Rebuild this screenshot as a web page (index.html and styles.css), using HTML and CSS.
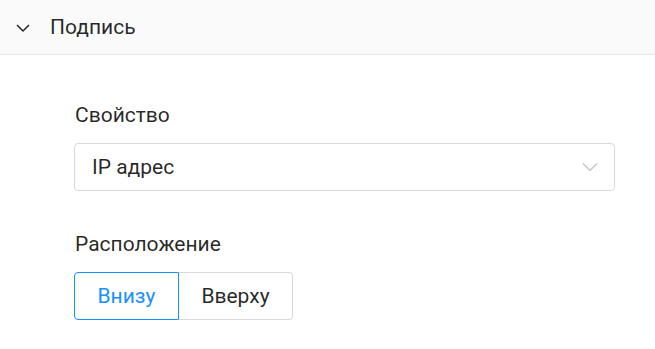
FILE: index.html
```html
<!DOCTYPE html>
<html lang="ru">
<head>
<meta charset="utf-8">
<link rel="stylesheet" href="styles.css">
</head>
<body>
<div class="panel">
  <div class="panel-header">
    <svg class="arrow" width="14" height="14" viewBox="0 0 14 14"><path d="M1 4 L7 10 L13 4" fill="none" stroke="#262626" stroke-width="1.5"/></svg>
    <span class="panel-title">Подпись</span>
  </div>
  <div class="panel-body">
    <div class="field">
      <div class="label">Свойство</div>
      <div class="select">
        <span>IP адрес</span>
        <svg width="16" height="16" viewBox="0 0 16 16"><path d="M1 4.5 L8 11.5 L15 4.5" fill="none" stroke="#bfbfbf" stroke-width="1.2"/></svg>
      </div>
    </div>
    <div class="field">
      <div class="label">Расположение</div>
      <div class="radio-group">
        <div class="radio active">Внизу</div>
        <div class="radio">Вверху</div>
      </div>
    </div>
  </div>
</div>
</body>
</html>
```
FILE: styles.css
```css
html, body { margin: 0; padding: 0; background: #fff; }
body { font-family: Roboto, "Noto Sans", sans-serif; color: rgba(0,0,0,0.85); }
.panel-header {
  height: 55px;
  background: #fafafa;
  border-bottom: 1px solid #e8e8e8;
  display: flex;
  align-items: center;
  padding-left: 16px;
  box-sizing: border-box;
}
.arrow { margin-right: 20px; margin-top: 1px; }
.panel-title { font-size: 21px; }
.panel-body { padding: 46px 40px 0 74px; }
.field { margin-bottom: 39px; }
.label { font-size: 21px; height: 28px; line-height: 28px; margin-bottom: 14px; padding-left: 1px; }
.select {
  height: 48px;
  box-sizing: border-box;
  border: 1px solid #d9d9d9;
  border-radius: 4px;
  display: flex;
  align-items: center;
  justify-content: space-between;
  padding: 0 16px 0 17px;
  font-size: 21px;
}
.radio-group { display: flex; }
.radio {
  height: 48px;
  box-sizing: border-box;
  border: 1px solid #d9d9d9;
  display: flex;
  align-items: center;
  justify-content: center;
  font-size: 21px;
}
.radio:first-child { width: 105px; border-radius: 4px 0 0 4px; }
.radio:last-child { width: 114px; border-left: none; border-radius: 0 4px 4px 0; }
.radio.active { border-color: #1890ff; color: #1890ff; }
```
